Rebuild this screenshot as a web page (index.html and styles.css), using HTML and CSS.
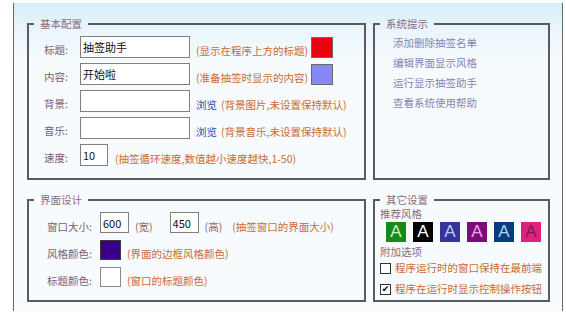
FILE: index.html
```html
<!doctype html>
<html>
<head>
<meta charset="utf-8">
<title>抽签助手 - 系统设置</title>
<link rel="stylesheet" href="styles.css">
</head>

<body>
<div class="win">
	<fieldset class="grp">
		<legend>基本配置</legend>
		<div class="bd basic">
			<div class="row">
				<label>标题:</label>
				<input class="txt" type="text" value="抽签助手">
				<span class="tip w">(显示在程序上方的标题)</span>
				<span class="sw red"></span>
			</div>
			<div class="row">
				<label>内容:</label>
				<input class="txt" type="text" value="开始啦">
				<span class="tip w">(准备抽签时显示的内容)</span>
				<span class="sw blue"></span>
			</div>
			<div class="row">
				<label>背景:</label>
				<input class="txt" type="text" value="">
				<a class="browse" href="javascript:;">浏览</a>
				<span class="tip near">(背景图片,未设置保持默认)</span>
			</div>
			<div class="row">
				<label>音乐:</label>
				<input class="txt" type="text" value="">
				<a class="browse" href="javascript:;">浏览</a>
				<span class="tip near">(背景音乐,未设置保持默认)</span>
			</div>
			<div class="row">
				<label>速度:</label>
				<input class="txt num" type="text" value="10">
				<span class="tip sp">(抽签循环速度,数值越小速度越快,1-50)</span>
			</div>
		</div>
	</fieldset>

	<fieldset class="grp">
		<legend>系统提示</legend>
		<div class="bd links">
			<a href="javascript:;">添加删除抽签名单</a>
			<a href="javascript:;">编辑界面显示风格</a>
			<a href="javascript:;">运行显示抽签助手</a>
			<a href="javascript:;">查看系统使用帮助</a>
		</div>
	</fieldset>

	<fieldset class="grp">
		<legend>界面设计</legend>
		<div class="bd face">
			<div class="row">
				<label>窗口大小:</label>
				<input class="txt size" type="text" value="600">
				<span class="unit">(宽)</span>
				<input class="txt size h" type="text" value="450">
				<span class="unit">(高)</span>
				<span class="tip far">(抽签窗口的界面大小)</span>
			</div>
			<div class="row">
				<label>风格颜色:</label>
				<span class="sw small purple"></span>
				<span class="tip">(界面的边框风格颜色)</span>
			</div>
			<div class="row">
				<label>标题颜色:</label>
				<span class="sw small white"></span>
				<span class="tip">(窗口的标题颜色)</span>
			</div>
		</div>
	</fieldset>

	<fieldset class="grp">
		<legend>其它设置</legend>
		<div class="bd other">
			<p class="sub">推荐风格</p>
			<div class="tiles">
				<span class="t1">A</span>
				<span class="t2">A</span>
				<span class="t3">A</span>
				<span class="t4">A</span>
				<span class="t5">A</span>
				<span class="t6">A</span>
			</div>
			<p class="sub add">附加选项</p>
			<div class="chk"><span class="box"></span>程序运行时的窗口保持在最前端</div>
			<div class="chk"><span class="box">&#10004;</span>程序在运行时显示控制操作按钮</div>
		</div>
	</fieldset>
</div>
</body>
</html>
```

FILE: styles.css
```css
*{margin:0;padding:0;box-sizing:border-box;}
body{background:#fff;font:10.5px/16px "Noto Sans CJK SC","Microsoft YaHei",sans-serif;color:#7d5d6d;}
a{text-decoration:none;}
.win{width:550px;height:308px;margin:3px 0 0 13px;padding:13px 0 0 13px;border:1px solid #666;border-top:0;border-bottom:0;background:linear-gradient(#d5eef8,#eaf6fb 28px,#f7fbfd 60px);display:grid;grid-template-columns:339px 177px;grid-template-rows:164px 110px;column-gap:7px;row-gap:12px;}
.grp{border:2px solid #5b5b5b;min-width:0;}
.grp legend{margin-left:5px;padding:0 6px;font-size:10.5px;line-height:16px;color:#8a6a7a;}

.row{display:flex;align-items:center;height:22px;margin-top:5px;}
.row:first-child{margin-top:0;}
.row label{padding-top:6px;flex:none;}
.txt{height:22px;border:1px solid #808080;background:#fff;font:11px "Noto Sans CJK SC",sans-serif;color:#111;padding:0 2px;outline:none;flex:none;}
.tip{color:#c96a36;padding-top:8px;margin-left:6px;white-space:nowrap;}
.sw{width:22px;height:21px;border:1px solid #6a6a6a;flex:none;}
.red{background:#ec0010;}
.blue{background:#8787f5;}
.purple{background:#3b0089;border-color:#3a3a3a;}
.white{background:#fff;border-color:#8a8a8a;}

.basic{padding:4px 0 0 15px;}
.basic label{width:36px;}
.basic .txt{width:110px;}
.basic .num{width:28px;}
.basic .w{width:115px;}
.basic .near{margin-left:4px;}
.basic .sp{margin-left:7px;}
.browse{color:#3d4c9b;margin-left:6px;padding-top:8px;}

.links{padding:1px 0 0 18px;display:flex;flex-direction:column;}
.links a{line-height:20px;color:#8684b6;}

.face{padding:4px 0 0 18px;}
.face .row{height:21px;margin-top:6px;}
.face .row:first-child{margin-top:0;}
.face label{width:53px;padding-top:8px;}
.face .size{width:29px;height:21px;}
.face .h{margin-left:17px;}
.unit{margin-left:6px;padding-top:8px;color:#8a6a6a;}
.face .far{margin-left:10px;}
.sw.small{width:21px;height:20px;}

.other{padding:0 0 0 5px;}
.sub{line-height:12px;color:#8a6a7a;}
.sub.add{margin-top:4px;}
.tiles{display:flex;gap:7px;margin:2px 0 0 6px;}
.tiles span{width:20px;height:20px;font:17px/20px "Liberation Sans",Arial,sans-serif;text-align:center;}
.t1{background:#178a1c;color:#c9f3c0;}
.t2{background:#000;color:#fff;}
.t3{background:#34349a;color:#c6c6f4;}
.t4{background:#7e0a80;color:#f3a6e3;}
.t5{background:#0b3b7c;color:#a8d6f4;}
.t6{background:#e21f7c;color:#7a1d55;}
.chk{display:flex;align-items:center;gap:4px;margin-top:2px;color:#c96a36;}
.chk + .chk{margin-top:5px;}
.box{width:11px;height:11px;border:1px solid #333;background:#fff;color:#000;font:9px/9px "DejaVu Sans",sans-serif;text-align:center;flex:none;}
```
